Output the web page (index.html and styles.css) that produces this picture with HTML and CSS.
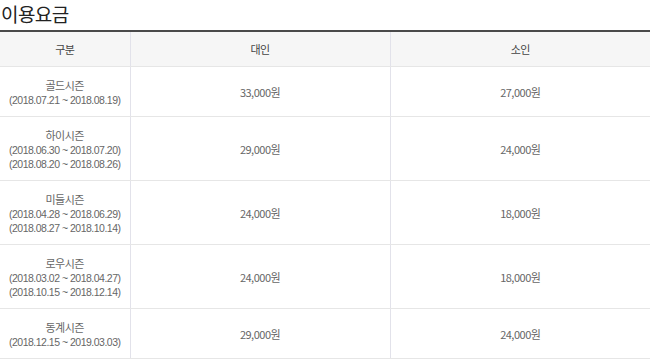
FILE: index.html
```html
<!DOCTYPE html>
<html lang="ko">
<head>
<meta charset="utf-8">
<link rel="stylesheet" href="styles.css">
</head>
<body>
<div class="page">
  <h2 class="title">이용요금</h2>
  <table class="fee">
    <colgroup>
      <col class="c1"><col class="c2"><col class="c3">
    </colgroup>
    <thead>
      <tr><th>구분</th><th>대인</th><th>소인</th></tr>
    </thead>
    <tbody>
      <tr>
        <td class="season"><span class="name">골드시즌</span><span class="date">(2018.07.21 ~ 2018.08.19)</span></td>
        <td>33,000원</td><td>27,000원</td>
      </tr>
      <tr>
        <td class="season"><span class="name">하이시즌</span><span class="date">(2018.06.30 ~ 2018.07.20)</span><span class="date">(2018.08.20 ~ 2018.08.26)</span></td>
        <td>29,000원</td><td>24,000원</td>
      </tr>
      <tr>
        <td class="season"><span class="name">미들시즌</span><span class="date">(2018.04.28 ~ 2018.06.29)</span><span class="date">(2018.08.27 ~ 2018.10.14)</span></td>
        <td>24,000원</td><td>18,000원</td>
      </tr>
      <tr>
        <td class="season"><span class="name">로우시즌</span><span class="date">(2018.03.02 ~ 2018.04.27)</span><span class="date">(2018.10.15 ~ 2018.12.14)</span></td>
        <td>24,000원</td><td>18,000원</td>
      </tr>
      <tr>
        <td class="season"><span class="name">동계시즌</span><span class="date">(2018.12.15 ~ 2019.03.03)</span></td>
        <td>29,000원</td><td>24,000원</td>
      </tr>
    </tbody>
  </table>
</div>
</body>
</html>
```
FILE: styles.css
```css
html, body {
  margin: 0;
  padding: 0;
  background: #fff;
}
body {
  font-family: "Noto Sans CJK KR", "Noto Sans", sans-serif;
}
.page {
  width: 650px;
}
.title {
  margin: 0;
  height: 30px;
  font-size: 19px;
  line-height: 27px;
  font-weight: 400;
  color: #222;
  letter-spacing: -0.6px;
  padding-left: 1px;
}
.fee {
  width: 650px;
  border-collapse: collapse;
  table-layout: fixed;
  border-top: 2px solid #4a4a4a;
  font-size: 11px;
  line-height: 14px;
  letter-spacing: -0.5px;
}
.c1 { width: 130px; }
.c2 { width: 260px; }
.c3 { width: 260px; }
.fee th {
  background: #f6f6f6;
  color: #444;
  font-weight: 400;
  padding: 9px 0 9px;
  line-height: 16px;
  border-bottom: 1px solid #e6e6e6;
  border-left: 1px solid #e2e2ea;
  text-align: center;
}
.fee td {
  color: #666;
  padding: 10px 0 9px;
  border-bottom: 1px solid #e6e6e6;
  border-left: 1px solid #e2e2ea;
  text-align: center;
  vertical-align: middle;
}
.fee th:first-child,
.fee td:first-child {
  border-left: none;
}
.name {
  display: block;
  line-height: 16px;
  height: 16px;
}
.date {
  display: block;
  height: 14px;
  line-height: 14px;
  font-family: "Liberation Sans", "Noto Sans", sans-serif;
  font-size: 10.5px;
  letter-spacing: -0.5px;
}
```
